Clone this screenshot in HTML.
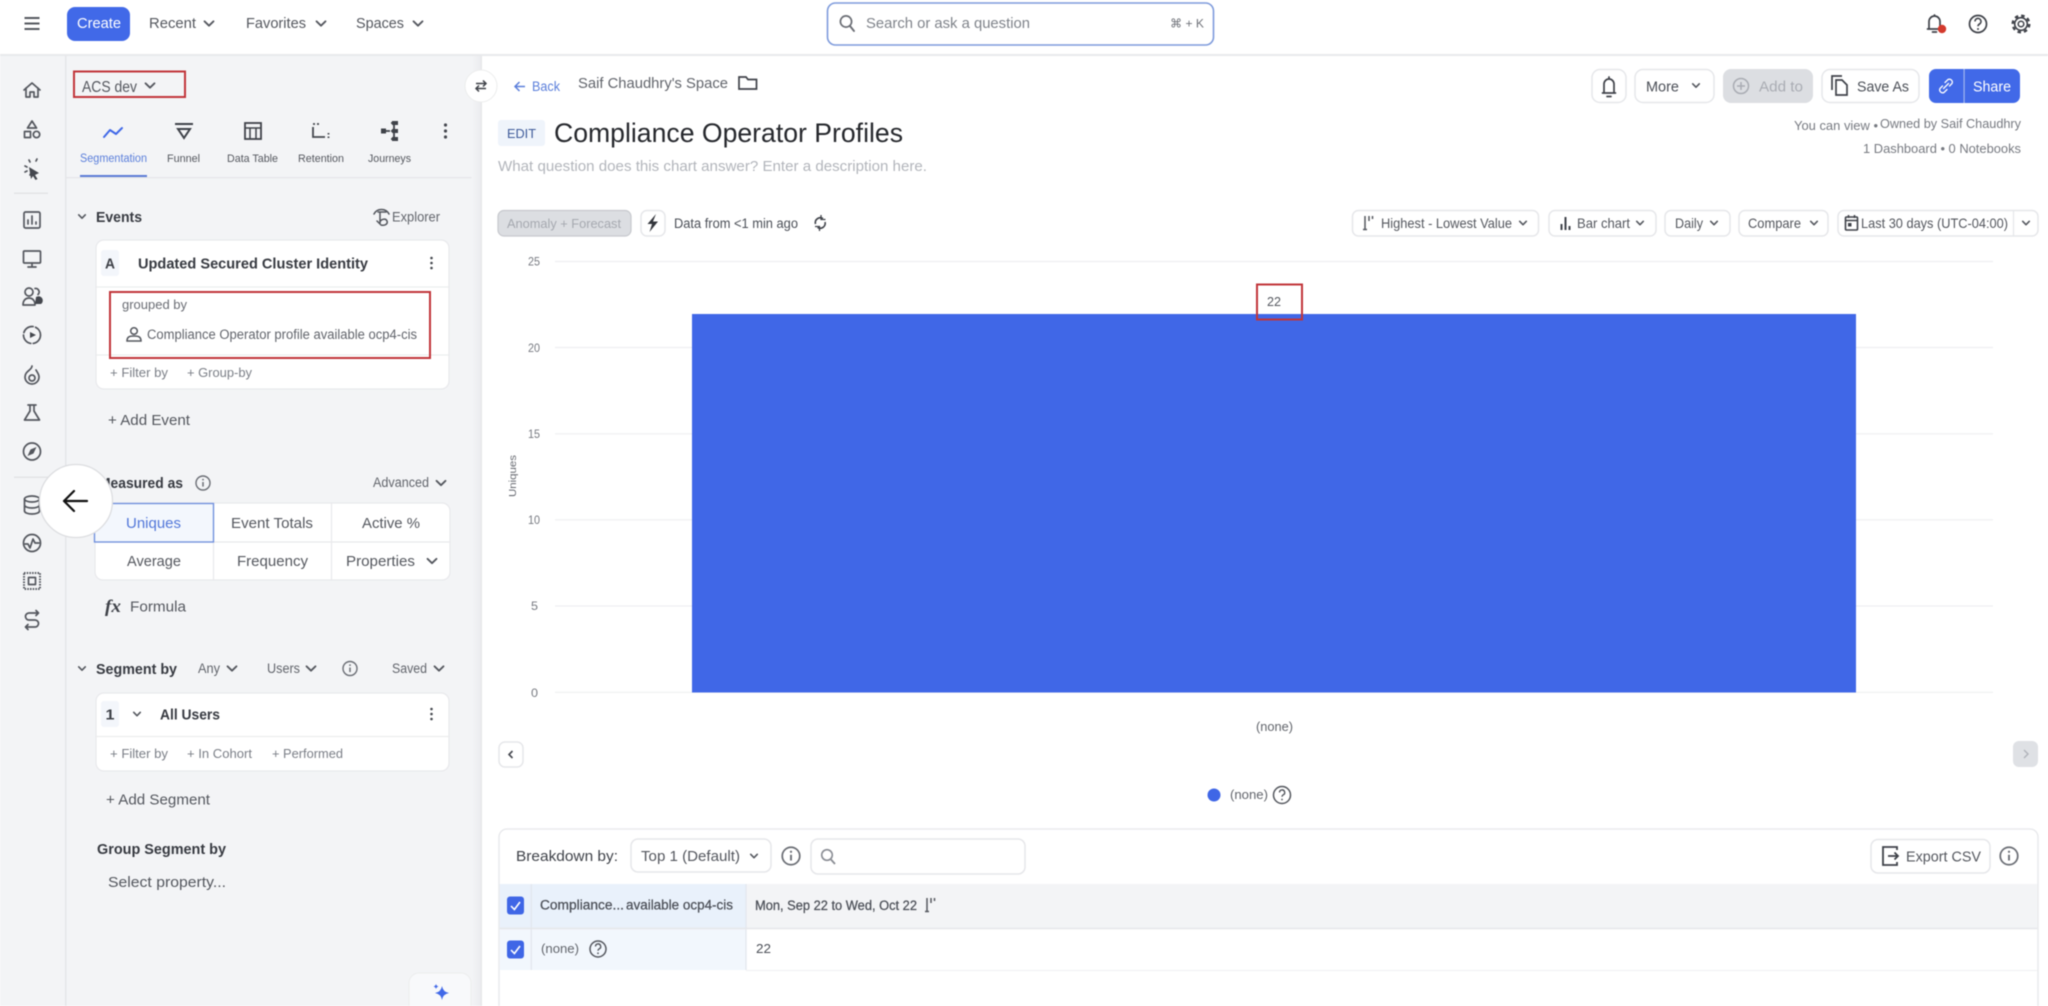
<!DOCTYPE html>
<html lang="en"><head><meta charset="utf-8"><title>Compliance Operator Profiles</title>
<style>
html,body{margin:0;padding:0;width:2048px;height:1006px;overflow:hidden;background:#fff}
svg{display:block;filter:blur(.55px)}
text{font-family:"Liberation Sans",sans-serif;fill:#4b4f57;font-size:14px}
.nav{font-size:15px;fill:#55585f}
.b{font-weight:700;fill:#373a41;font-size:15px}
.m{font-size:15px;fill:#55585f}
.s{font-size:13px;fill:#62656c}
.g{font-size:13px;fill:#7b7f87}
.a{font-size:14.5px;font-weight:700;fill:#6a6e76}
.t{font-size:11px;fill:#55585f}
.c{font-size:14px;fill:#54575e}
.ln{fill:none;stroke:#54575e;stroke-width:1.7;stroke-linecap:round;stroke-linejoin:round}
.btn{fill:#fff;stroke:#e6e7ea;stroke-width:1.5}
.red{fill:none;stroke:#c1353a;stroke-width:2}
.grid{stroke:#eeeff1;stroke-width:1.2}
.tick{font-size:11.5px;fill:#777a81}
</style></head><body>
<svg width="2048" height="1006" viewBox="0 0 2048 1006" xmlns="http://www.w3.org/2000/svg">
<defs>
<linearGradient id="edge" x1="0" x2="1" y1="0" y2="0"><stop offset="0" stop-color="#f3f4f6"/><stop offset="1" stop-color="#ebecef"/></linearGradient>
<g id="ch"><path d="M-4.5-2.2 0 2.2 4.5-2.2" fill="none" stroke="#55585f" stroke-width="1.8" stroke-linecap="round" stroke-linejoin="round"/></g>
<g id="chs"><path d="M-3.300-1.700 0 1.700 3.300-1.700" fill="none" stroke="#55585f" stroke-width="1.600" stroke-linecap="round" stroke-linejoin="round"/></g>
<g id="kb"><circle cx="0" cy="-6" r="1.6" fill="#44474e"/><circle cx="0" cy="0" r="1.6" fill="#44474e"/><circle cx="0" cy="6" r="1.6" fill="#44474e"/></g>
<g id="kbs"><circle cx="0" cy="-5" r="1.3" fill="#44474e"/><circle cx="0" cy="0" r="1.3" fill="#44474e"/><circle cx="0" cy="5" r="1.3" fill="#44474e"/></g>
<g id="inf"><circle r="7" fill="none" stroke="#6b6e75" stroke-width="1.4"/><path d="M0-1V3.6" stroke="#6b6e75" stroke-width="1.5"/><circle cy="-3.4" r=".9" fill="#6b6e75"/></g>
<g id="cb"><rect width="17" height="18" rx="3" fill="#3f66e6"/><path d="M4 9.5 7.4 13 13 5.5" fill="none" stroke="#fff" stroke-width="1.6"/></g>
<g id="sort"><path d="M0 0V14M-2 13.500H2" fill="none" stroke="#54575e" stroke-width="1.500"/><path d="M4 0V5M7.500 0V3" stroke="#54575e" stroke-width="1.500"/></g>
</defs>

<rect width="2048" height="1006" fill="#fff"/>
<!-- left rail + panel -->
<rect x="0" y="55" width="481" height="951" fill="#f3f4f6"/>
<rect x="472" y="55" width="9" height="951" fill="url(#edge)"/>
<rect x="65" y="55" width="1.5" height="951" fill="#e5e6e9"/>
<rect x="480.500" y="55" width="1.5" height="951" fill="#e7e8ea"/>
<rect x="0" y="54" width="2048" height="2" fill="#e8e9eb"/>

<!-- top bar -->
<path d="M24.500 18H39.500M24.500 23.500H39.500M24.500 29H39.500" stroke="#55585f" stroke-width="2"/>
<rect x="67" y="7" width="63" height="34" rx="8" fill="#4169e8"/>
<text x="77" y="28" textLength="44" lengthAdjust="spacingAndGlyphs" font-size="15" style="fill:#fff;font-size:15px">Create</text>
<text class="nav" x="149" y="28" textLength="47" lengthAdjust="spacingAndGlyphs">Recent</text><use href="#ch" x="209" y="23.500"/>
<text class="nav" x="246" y="28" textLength="60" lengthAdjust="spacingAndGlyphs">Favorites</text><use href="#ch" x="321" y="23.500"/>
<text class="nav" x="356" y="28" textLength="48" lengthAdjust="spacingAndGlyphs">Spaces</text><use href="#ch" x="418" y="23.500"/>

<rect x="827.500" y="3" width="386" height="42" rx="8" fill="#fff" stroke="#7e9bdc" stroke-width="1.6"/>
<circle cx="846" cy="21.500" r="5.600" fill="none" stroke="#6b6e75" stroke-width="1.7"/><path d="M850 26 854 31" stroke="#6b6e75" stroke-width="1.9" stroke-linecap="round"/>
<text x="866" y="28" textLength="164" lengthAdjust="spacingAndGlyphs" style="fill:#7f838a;font-size:15px">Search or ask a question</text>
<text x="1170" y="27.500" textLength="34" lengthAdjust="spacingAndGlyphs" style="fill:#6f7279;font-size:12px">⌘ + K</text>

<path d="M1929 29V21.500a5.500 5.500 0 0 1 11 0V29M1927.500 29H1941.500M1934.500 15V16M1932.500 32H1936.500" fill="none" stroke="#3f4249" stroke-width="1.700" stroke-linecap="round"/>
<circle cx="1942" cy="29" r="4.200" fill="#d3392c"/>
<circle cx="1978" cy="24" r="8.500" fill="none" stroke="#3f4249" stroke-width="1.700"/><path d="M1975 21.500a3 3 0 1 1 4.500 2.500c-1 .6-1.500 1-1.500 2.300" fill="none" stroke="#3f4249" stroke-width="1.600"/><circle cx="1978" cy="29" r="1" fill="#3f4249"/>
<circle cx="2021" cy="24" r="6.300" fill="none" stroke="#3f4249" stroke-width="1.600"/><circle cx="2021" cy="24" r="8.300" fill="none" stroke="#3f4249" stroke-width="2.400" stroke-dasharray="3.500 3"/><circle cx="2021" cy="24" r="2.800" fill="none" stroke="#3f4249" stroke-width="1.500"/>

<!-- rail icons -->
<g class="ln">
<path d="M24 90 32 83 40 90M26 88V97H30V92H34V97H38V88"/>
<path d="M32 121 36.500 128H27.500ZM24.500 131.500H30.500V137.500H24.500Z"/><circle cx="36.500" cy="134.500" r="3.200"/>
<path d="M30 162 29 160M36 161 37 159M25 166 27 167M25 172 27 171M30 175 31 173"/>
<rect x="24" y="212" width="16" height="16" rx="1.500"/><path d="M28 224V220M32 224V216M36 224V222"/>
<rect x="23.500" y="251" width="17" height="12" rx="1"/><path d="M32 263V266.500M28 267H36"/>
<circle cx="29" cy="292" r="4"/><path d="M23 305C23 300 26 298 29 298S35 300 35 305Z"/><path d="M35 288.500a3.500 3.500 0 0 1 3 6"/>
<circle cx="32" cy="335" r="8.500" stroke-dasharray="12 2.500"/>
<path d="M32 366C32 370 25 371 25 377A7 7 0 0 0 39 377C39 374 37 372 36 370"/><circle cx="32" cy="378" r="3"/>
<path d="M28 405H36M30 405V411L24.500 420H39.500L34 411V405"/>
<circle cx="32" cy="451.500" r="8.500"/>
<ellipse cx="32" cy="499" rx="7.500" ry="3"/><path d="M24.500 499V511A7.500 3 0 0 0 39.500 511V499M24.500 505A7.500 3 0 0 0 39.500 505"/>
<circle cx="32" cy="543" r="8.500"/><path d="M25 544H28L30 548 33 539 35 543H39"/>
<rect x="28.500" y="577.500" width="7" height="7"/>
<path d="M38 613H29A3 3 0 0 0 29 620H35A3.500 3.500 0 0 1 35 627H26M36 610.500 38.500 613 36 615.500M28 624.500 25.500 627 28 629.500"/>
</g>
<rect x="24" y="573" width="16" height="16" fill="none" stroke="#54575e" stroke-width="2" stroke-dasharray="1.500 1.200"/>
<path d="M29 167 39 173 35 175 37.500 179 35.500 180 33 176 31 179Z" fill="#44474e"/>
<path d="M30 332 36 335 30 338Z" fill="#44474e"/>
<path d="M36.500 447 33.500 453.500 27.500 456 30.500 449.500Z" fill="#54575e"/>
<path d="M36 297a4 4 0 0 1 5 7h-6z" fill="#44474e"/>
<rect x="14" y="192.500" width="34" height="1.500" fill="#e3e4e7"/>
<rect x="14" y="476.500" width="34" height="1.500" fill="#e3e4e7"/>

<!-- panel header -->
<text x="82" y="92" textLength="55" lengthAdjust="spacingAndGlyphs" style="font-size:15.500px;fill:#54575e">ACS dev</text><use href="#ch" x="150" y="85.500"/>
<rect class="red" x="74" y="71.500" width="111" height="25.500"/>

<!-- tabs -->
<path d="M104 137 110 130 116 134 122 128" fill="none" stroke="#4169e8" stroke-width="2" stroke-linecap="round" stroke-linejoin="round"/>
<text x="80" y="162" textLength="67" lengthAdjust="spacingAndGlyphs" style="font-size:11.500px;fill:#5b7fdb">Segmentation</text>
<rect x="80" y="175" width="67" height="2.500" fill="#5b7bd6"/>
<rect x="66.500" y="177" width="405" height="1.300" fill="#e5e6e9"/>
<path d="M175 124H193M178 129H190L184 138Z" fill="none" stroke="#3f4249" stroke-width="2"/>
<rect x="245" y="123" width="16" height="16" fill="none" stroke="#3f4249" stroke-width="1.800"/><path d="M245 128H261M250 128V139M256 128V139" stroke="#3f4249" stroke-width="1.500"/>
<path d="M313 127V137H325" fill="none" stroke="#44474e" stroke-width="1.800"/><path d="M313 124H315M317 124H319M328.500 133V134.500M328.500 136.500V138" stroke="#44474e" stroke-width="1.800"/>
<path d="M383 131H390M394 123V139M391 123H398M391 131H398M391 139H398" fill="none" stroke="#3f4249" stroke-width="1.800"/><rect x="381" y="128.500" width="5" height="5" fill="#3f4249"/><rect x="392" y="121" width="6" height="4" fill="#3f4249"/><rect x="392" y="129" width="6" height="4" fill="#3f4249"/><rect x="392" y="137" width="6" height="4" fill="#3f4249"/>
<use href="#kb" x="445.500" y="131"/>
<text class="t" x="167" y="162" textLength="33" lengthAdjust="spacingAndGlyphs">Funnel</text>
<text class="t" x="227" y="162" textLength="51" lengthAdjust="spacingAndGlyphs">Data Table</text>
<text class="t" x="298" y="162" textLength="46" lengthAdjust="spacingAndGlyphs">Retention</text>
<text class="t" x="368" y="162" textLength="43" lengthAdjust="spacingAndGlyphs">Journeys</text>

<!-- events -->
<use href="#chs" x="82" y="216.500"/>
<text class="b" x="96" y="222" textLength="46" lengthAdjust="spacingAndGlyphs">Events</text>
<path d="M374 214C377 208 386 208 389 214M378 212H386M380 212V224L377 221M380 222C381 219 386 218 387 221 388 224 385 226 381 225" fill="none" stroke="#54575e" stroke-width="1.500" stroke-linecap="round"/>
<text x="392" y="221.500" textLength="48" lengthAdjust="spacingAndGlyphs" style="font-size:13.500px;fill:#62656c">Explorer</text>

<rect x="96" y="240" width="353" height="149" rx="8" fill="#fff" stroke="#e8e9ec" stroke-width="1.200"/>
<rect x="101" y="250" width="18" height="26" rx="3" fill="#f3f6fb"/>
<text class="b" x="105" y="268.500" textLength="10" lengthAdjust="spacingAndGlyphs" style="fill:#3f4249;font-size:15px;font-weight:700">A</text>
<text class="b" x="138" y="268.500" textLength="230" lengthAdjust="spacingAndGlyphs">Updated Secured Cluster Identity</text>
<use href="#kbs" x="431.500" y="263"/>
<path d="M96.500 287H448.500M96.500 355H448.500" stroke="#eceded" stroke-width="1.300"/>
<rect class="red" x="110" y="292" width="320" height="66"/>
<text x="122" y="309" textLength="65" lengthAdjust="spacingAndGlyphs" style="font-size:13px;fill:#6a6d74">grouped by</text>
<circle cx="134" cy="331" r="3.300" fill="none" stroke="#54575e" stroke-width="1.500"/><path d="M127 341C127 336.500 130 336 134 336S141 336.500 141 341Z" fill="none" stroke="#54575e" stroke-width="1.500"/>
<text x="147" y="339" textLength="270" lengthAdjust="spacingAndGlyphs" style="font-size:13.500px;fill:#62656c">Compliance Operator profile available ocp4-cis</text>
<text class="g" x="110" y="377" textLength="58" lengthAdjust="spacingAndGlyphs">+ Filter by</text>
<text class="g" x="187" y="377" textLength="65" lengthAdjust="spacingAndGlyphs">+ Group-by</text>
<text class="a" x="108" y="425" textLength="82" lengthAdjust="spacingAndGlyphs" style="font-weight:400;fill:#54575e">+ Add Event</text>

<!-- measured as -->
<text class="b" x="99" y="488" textLength="84" lengthAdjust="spacingAndGlyphs">Measured as</text>
<use href="#inf" x="203" y="483"/>
<text x="373" y="487" textLength="56" lengthAdjust="spacingAndGlyphs" style="font-size:13.500px;fill:#62656c">Advanced</text><use href="#ch" x="441" y="483"/>
<rect x="95" y="503" width="355" height="77" rx="8" fill="#fff" stroke="#e8e9ec" stroke-width="1.200"/>
<path d="M213.500 503V580M331.500 503V580M95 542H450" stroke="#e8e9ec" stroke-width="1.200"/>
<rect x="94.500" y="503.500" width="119" height="38.500" fill="#f3f7fd" stroke="#6c8ddc" stroke-width="1.300"/>
<text x="126" y="528" textLength="55" lengthAdjust="spacingAndGlyphs" style="font-size:15px;fill:#5277d9">Uniques</text>
<text class="m" x="231" y="528" textLength="82" lengthAdjust="spacingAndGlyphs">Event Totals</text>
<text class="m" x="362" y="528" textLength="58" lengthAdjust="spacingAndGlyphs">Active %</text>
<text class="m" x="127" y="566" textLength="54" lengthAdjust="spacingAndGlyphs">Average</text>
<text class="m" x="237" y="566" textLength="71" lengthAdjust="spacingAndGlyphs">Frequency</text>
<text class="m" x="346" y="566" textLength="69" lengthAdjust="spacingAndGlyphs">Properties</text><use href="#ch" x="432" y="561"/>
<text x="105" y="612" textLength="16" lengthAdjust="spacingAndGlyphs" style="font-family:'Liberation Serif',serif;font-style:italic;font-weight:700;font-size:18px;fill:#3f4249">fx</text>
<text class="m" x="130" y="611.500" textLength="56" lengthAdjust="spacingAndGlyphs">Formula</text>

<!-- segment by -->
<use href="#chs" x="82" y="668.500"/>
<text class="b" x="96" y="674" textLength="81" lengthAdjust="spacingAndGlyphs">Segment by</text>
<text x="198" y="673" textLength="22" lengthAdjust="spacingAndGlyphs" style="font-size:13.500px;fill:#62656c">Any</text><use href="#ch" x="232" y="668.500"/>
<text x="267" y="673" textLength="33" lengthAdjust="spacingAndGlyphs" style="font-size:13.500px;fill:#62656c">Users</text><use href="#ch" x="311" y="668.500"/>
<use href="#inf" x="350" y="668.500"/>
<text x="392" y="673" textLength="35" lengthAdjust="spacingAndGlyphs" style="font-size:13.500px;fill:#62656c">Saved</text><use href="#ch" x="439" y="668.500"/>

<rect x="96" y="693" width="353" height="78" rx="8" fill="#fff" stroke="#e8e9ec" stroke-width="1.200"/>
<rect x="101" y="701" width="18" height="26" rx="3" fill="#f3f6fb"/>
<text x="105.500" y="719.500" textLength="9" lengthAdjust="spacingAndGlyphs" style="font-size:15px;font-weight:700;fill:#3f4249">1</text>
<use href="#chs" x="137" y="714"/>
<text class="b" x="160" y="719.500" textLength="60" lengthAdjust="spacingAndGlyphs">All Users</text>
<use href="#kbs" x="431.500" y="714"/>
<path d="M96.500 736.500H448.500" stroke="#eceded" stroke-width="1.300"/>
<text class="g" x="110" y="758" textLength="58" lengthAdjust="spacingAndGlyphs">+ Filter by</text>
<text class="g" x="187" y="758" textLength="65" lengthAdjust="spacingAndGlyphs">+ In Cohort</text>
<text class="g" x="272" y="758" textLength="71" lengthAdjust="spacingAndGlyphs">+ Performed</text>
<text class="a" x="106" y="804.500" textLength="104" lengthAdjust="spacingAndGlyphs" style="font-weight:400;fill:#54575e">+ Add Segment</text>
<text class="b" x="97" y="854" textLength="129" lengthAdjust="spacingAndGlyphs" style="font-size:14.500px">Group Segment by</text>
<text class="a" x="108" y="887" textLength="118" lengthAdjust="spacingAndGlyphs" style="font-weight:400;fill:#54575e">Select property...</text>

<rect x="409" y="973" width="62" height="50" rx="10" fill="#f8f9fb" stroke="#eceded"/>
<path d="M442 986Q443 992 449 993 443 994 442 1000 441 994 435 993 441 992 442 986ZM436 984Q436.500 986 438.500 986.500 436.500 987 436 989 435.500 987 433.500 986.500 435.500 986 436 984Z" fill="#4169e8"/>

<!-- header of content -->
<path d="M525 86.500H515M519.500 82 515 86.500 519.500 91" fill="none" stroke="#5b7fdb" stroke-width="1.500"/>
<text x="532" y="91" textLength="28" lengthAdjust="spacingAndGlyphs" style="font-size:13.500px;fill:#5b7fdb">Back</text>
<text x="578" y="88" textLength="150" lengthAdjust="spacingAndGlyphs" style="font-size:14.500px;fill:#62656c">Saif Chaudhry's Space</text>
<path d="M739 89V77H746L748 79.500H756.500V89Z" fill="none" stroke="#3f4249" stroke-width="1.700"/>

<rect x="498" y="120" width="47" height="26" rx="3" fill="#eff4fb"/>
<text x="507" y="138" textLength="29" lengthAdjust="spacingAndGlyphs" style="font-size:13px;fill:#3d5a99">EDIT</text>
<text x="554" y="142" textLength="349" lengthAdjust="spacingAndGlyphs" style="font-size:27px;fill:#26282d">Compliance Operator Profiles</text>
<text x="498" y="171" textLength="429" lengthAdjust="spacingAndGlyphs" style="font-size:15px;fill:#b2b5bb">What question does this chart answer? Enter a description here.</text>

<rect x="498" y="210.500" width="133" height="25.500" rx="6" fill="#dcdee2" stroke="#c6c8cd" stroke-width="1.200"/>
<text x="507" y="228" textLength="114" lengthAdjust="spacingAndGlyphs" style="font-size:13px;fill:#a6a9b0">Anomaly + Forecast</text>
<rect class="btn" x="641" y="210.500" width="24" height="25.500" rx="6"/>
<path d="M656 214 647.500 224H652L649.500 232 658 221.500H653Z" fill="#33363c"/>
<text x="674" y="228" textLength="124" lengthAdjust="spacingAndGlyphs" style="font-size:13.500px;fill:#4b4f57">Data from &lt;1 min ago</text>
<path d="M815.500 224A5 5 0 0 1 823 218.500M825 222A5 5 0 0 1 817.500 227.500" fill="none" stroke="#3f4249" stroke-width="1.600"/><path d="M821 215V219.500H825.500M819.500 231V226.500H815" fill="none" stroke="#3f4249" stroke-width="1.300"/>

<rect class="btn" x="1592" y="69.500" width="34" height="33" rx="8"/>
<path d="M1604 93V84a5 5 0 0 1 10 0V93M1602.500 93H1615.500M1609 77V79M1607 96.500H1611" fill="none" stroke="#3f4249" stroke-width="1.700" stroke-linecap="round"/>
<rect class="btn" x="1635" y="69.500" width="79" height="33" rx="8"/>
<text x="1646" y="91.500" textLength="33" lengthAdjust="spacingAndGlyphs" style="font-size:15px;fill:#4b4f57">More</text><use href="#chs" x="1696" y="85.500"/>
<rect x="1723" y="69" width="90" height="34" rx="8" fill="#dcdee2"/>
<circle cx="1741" cy="86" r="7.500" fill="none" stroke="#a9acb3" stroke-width="1.500"/><path d="M1741 82V90M1737 86H1745" stroke="#a9acb3" stroke-width="1.500"/>
<text x="1759" y="91.500" textLength="44" lengthAdjust="spacingAndGlyphs" style="font-size:15px;fill:#a9acb3">Add to</text>
<rect class="btn" x="1822" y="69.500" width="97" height="33" rx="8"/>
<path d="M1832 90V76H1842M1836 80H1842L1847 85V95H1836Z" fill="none" stroke="#3f4249" stroke-width="1.700"/>
<text x="1857" y="91.500" textLength="52" lengthAdjust="spacingAndGlyphs" style="font-size:15px;fill:#4b4f57">Save As</text>
<rect x="1929" y="69" width="91" height="34" rx="7" fill="#4169e8"/>
<rect x="1963.500" y="69" width="1.200" height="34" fill="#9fb5ef"/>
<path d="M1945 82.500 1948 79.500A3 3 0 0 1 1952 83.500L1949.500 86M1947 89.500 1944 92.500A3 3 0 0 1 1940 88.500L1942.500 86M1943.500 88.500 1948.500 83.500" fill="none" stroke="#fff" stroke-width="1.300" stroke-linecap="round"/>
<text x="1973" y="91.500" textLength="38" lengthAdjust="spacingAndGlyphs" style="font-size:15px;fill:#fff">Share</text>

<text x="1794" y="130" textLength="84" lengthAdjust="spacingAndGlyphs" style="font-size:12.500px;fill:#777a81">You can view •</text>
<text x="1880" y="128" textLength="141" lengthAdjust="spacingAndGlyphs" style="font-size:12.500px;fill:#777a81">Owned by Saif Chaudhry</text>
<text x="1863" y="153" textLength="158" lengthAdjust="spacingAndGlyphs" style="font-size:12.500px;fill:#777a81">1 Dashboard • 0 Notebooks</text>

<!-- chart controls -->
<g>
<rect class="btn" x="1352.500" y="210.500" width="186" height="25.500" rx="6"/>
<use href="#sort" x="1365" y="216"/>
<text class="c" x="1381" y="228" textLength="131" lengthAdjust="spacingAndGlyphs">Highest - Lowest Value</text><use href="#chs" x="1523" y="223" />
<rect class="btn" x="1549" y="210.500" width="107" height="25.500" rx="6"/>
<path d="M1561.500 230V224M1565.500 230V217M1569.500 230V226" stroke="#3f4249" stroke-width="2"/>
<text class="c" x="1577" y="228" textLength="53" lengthAdjust="spacingAndGlyphs">Bar chart</text><use href="#chs" x="1640" y="223"/>
<rect class="btn" x="1665" y="210.500" width="65" height="25.500" rx="6"/>
<text class="c" x="1675" y="228" textLength="28" lengthAdjust="spacingAndGlyphs">Daily</text><use href="#chs" x="1714" y="223"/>
<rect class="btn" x="1739" y="210.500" width="89" height="25.500" rx="6"/>
<text class="c" x="1748" y="228" textLength="53" lengthAdjust="spacingAndGlyphs">Compare</text><use href="#chs" x="1814" y="223"/>
<rect class="btn" x="1838" y="210.500" width="200" height="25.500" rx="6"/>
<path d="M2013.500 211V235.500" stroke="#e6e7ea" stroke-width="1.300"/>
<rect x="1845.500" y="217" width="12" height="13" rx="1" fill="none" stroke="#3f4249" stroke-width="1.600"/><path d="M1845.500 220.500H1857.500M1848.500 215V218M1854.500 215V218" stroke="#3f4249" stroke-width="1.500"/><rect x="1848" y="223" width="3.500" height="3.500" fill="#3f4249"/>
<text class="c" x="1861" y="228" textLength="147" lengthAdjust="spacingAndGlyphs">Last 30 days (UTC-04:00)</text><use href="#chs" x="2026" y="223"/>
</g>

<!-- chart -->
<path class="grid" d="M555 261.500H1993M555 347.500H1993M555 433.800H1993M555 519.800H1993M555 606H1993M555 692.300H1993"/>
<text class="tick" x="528" y="265.500" textLength="12" lengthAdjust="spacingAndGlyphs">25</text>
<text class="tick" x="528" y="352" textLength="12" lengthAdjust="spacingAndGlyphs">20</text>
<text class="tick" x="528" y="438" textLength="12" lengthAdjust="spacingAndGlyphs">15</text>
<text class="tick" x="528" y="524" textLength="12" lengthAdjust="spacingAndGlyphs">10</text>
<text class="tick" x="531" y="610" textLength="7" lengthAdjust="spacingAndGlyphs">5</text>
<text class="tick" x="531" y="697" textLength="7" lengthAdjust="spacingAndGlyphs">0</text>
<text class="tick" transform="translate(516 497) rotate(-90)" textLength="42" lengthAdjust="spacingAndGlyphs" style="font-size:10.500px;fill:#666970">Uniques</text>
<rect x="692" y="314" width="1164" height="378.500" fill="#4067e7"/>
<text x="1267" y="306" textLength="14" lengthAdjust="spacingAndGlyphs" style="font-size:12.500px;fill:#55585f">22</text>
<rect class="red" x="1257" y="284.500" width="45" height="35"/>
<text x="1256" y="731" textLength="37" lengthAdjust="spacingAndGlyphs" style="font-size:12.500px;fill:#62656c">(none)</text>

<rect class="btn" x="499" y="742" width="24" height="25" rx="6"/>
<path d="M512.500 751 509 754.500 512.500 758" fill="none" stroke="#44474e" stroke-width="1.600"/>
<rect x="2013" y="741" width="25" height="26" rx="6" fill="#dfe1e5"/>
<path d="M2024 750 2028 754 2024 758" fill="none" stroke="#b0b3ba" stroke-width="1.400"/>

<circle cx="1214" cy="795" r="6.500" fill="#3f66e6"/>
<text x="1230" y="799" textLength="38" lengthAdjust="spacingAndGlyphs" style="font-size:12.500px;fill:#62656c">(none)</text>
<circle cx="1282" cy="795" r="8.500" fill="none" stroke="#55585f" stroke-width="1.500"/><path d="M1279.500 792.500a2.600 2.600 0 1 1 3.800 2.300c-.9.500-1.300 1-1.300 2" fill="none" stroke="#55585f" stroke-width="1.400"/><circle cx="1282" cy="799.500" r=".9" fill="#55585f"/>

<!-- table -->
<rect x="499" y="829" width="1539" height="200" rx="8" fill="#fff" stroke="#e6e7ea" stroke-width="1.300"/>
<text x="516" y="861" textLength="102" lengthAdjust="spacingAndGlyphs" style="font-size:14.500px;fill:#3f4249">Breakdown by:</text>
<rect class="btn" x="631" y="839" width="140" height="33" rx="7"/>
<text x="641" y="861" textLength="99" lengthAdjust="spacingAndGlyphs" style="font-size:14.500px;fill:#54575e">Top 1 (Default)</text><use href="#chs" x="754" y="856"/>
<g transform="translate(791 856) scale(1.250)"><use href="#inf"/></g>
<rect class="btn" x="811" y="839" width="214" height="35" rx="7"/>
<circle cx="827" cy="855" r="5.300" fill="none" stroke="#8a8d94" stroke-width="1.600"/><path d="M831 859.500 835 864" stroke="#8a8d94" stroke-width="1.800"/>
<rect class="btn" x="1871" y="839.500" width="119" height="33.500" rx="7"/>
<path d="M1897 850V847H1883V865H1897V862M1888 856H1898M1894.500 852.500 1898 856 1894.500 859.500" fill="none" stroke="#3f4249" stroke-width="1.800"/>
<text x="1906" y="861.500" textLength="75" lengthAdjust="spacingAndGlyphs" style="font-size:14.500px;fill:#54575e">Export CSV</text>
<g transform="translate(2009 856) scale(1.250)"><use href="#inf"/></g>

<rect x="499.700" y="884" width="1537.600" height="44" fill="#f3f4f6"/>
<rect x="499.700" y="884" width="246" height="44" fill="#e9f1fb"/>
<rect x="499.700" y="929" width="246" height="41" fill="#f2f7fd"/>
<path d="M531.300 884V970M746 884V970" stroke="#e3e7ee" stroke-width="1.300"/>
<path d="M499.700 928.500H2037.300" stroke="#e5e6e9" stroke-width="1.500"/>
<path d="M746 970.500H2037.300" stroke="#f1f2f4" stroke-width="1.200"/>
<use href="#cb" x="507" y="896.500"/>
<use href="#cb" x="507" y="940.500"/>
<text x="540" y="909.500" textLength="84" lengthAdjust="spacingAndGlyphs" style="font-size:13.500px;fill:#4b4f57;stroke:#4b4f57;stroke-width:.25">Compliance...</text>
<text x="626" y="909.500" textLength="107" lengthAdjust="spacingAndGlyphs" style="font-size:13.500px;fill:#4b4f57;stroke:#4b4f57;stroke-width:.25">available ocp4-cis</text>
<text x="755" y="910" textLength="162" lengthAdjust="spacingAndGlyphs" style="font-size:13.500px;fill:#4b4f57;stroke:#4b4f57;stroke-width:.25">Mon, Sep 22 to Wed, Oct 22</text>
<use href="#sort" x="927" y="898"/>
<text x="541" y="953" textLength="38" lengthAdjust="spacingAndGlyphs" style="font-size:13px;fill:#62656c">(none)</text>
<circle cx="598" cy="949" r="8" fill="none" stroke="#55585f" stroke-width="1.500"/><path d="M595.500 946.500a2.600 2.600 0 1 1 3.800 2.300c-.9.500-1.300 1-1.300 2" fill="none" stroke="#55585f" stroke-width="1.400"/><circle cx="598" cy="953.300" r=".9" fill="#55585f"/>
<text x="756" y="953" textLength="15" lengthAdjust="spacingAndGlyphs" style="font-size:13px;fill:#4b4f57">22</text>

<!-- toggle + overlay -->
<circle cx="481" cy="86" r="16" fill="#fff" stroke="#eceded"/>
<path d="M476 83.500H486M483 80.500 486 83.500 483 86.500M486 88.500H476M479 85.500 476 88.500 479 91.500" fill="none" stroke="#3f4249" stroke-width="1.500"/>
<circle cx="76" cy="501" r="36.500" fill="#fff" stroke="#dcdde0" stroke-width="1.300"/>
<path d="M87 501H64M74 491 64 501 74 511" fill="none" stroke="#111" stroke-width="2.200" stroke-linecap="round" stroke-linejoin="round"/>
</svg>
</body></html>
